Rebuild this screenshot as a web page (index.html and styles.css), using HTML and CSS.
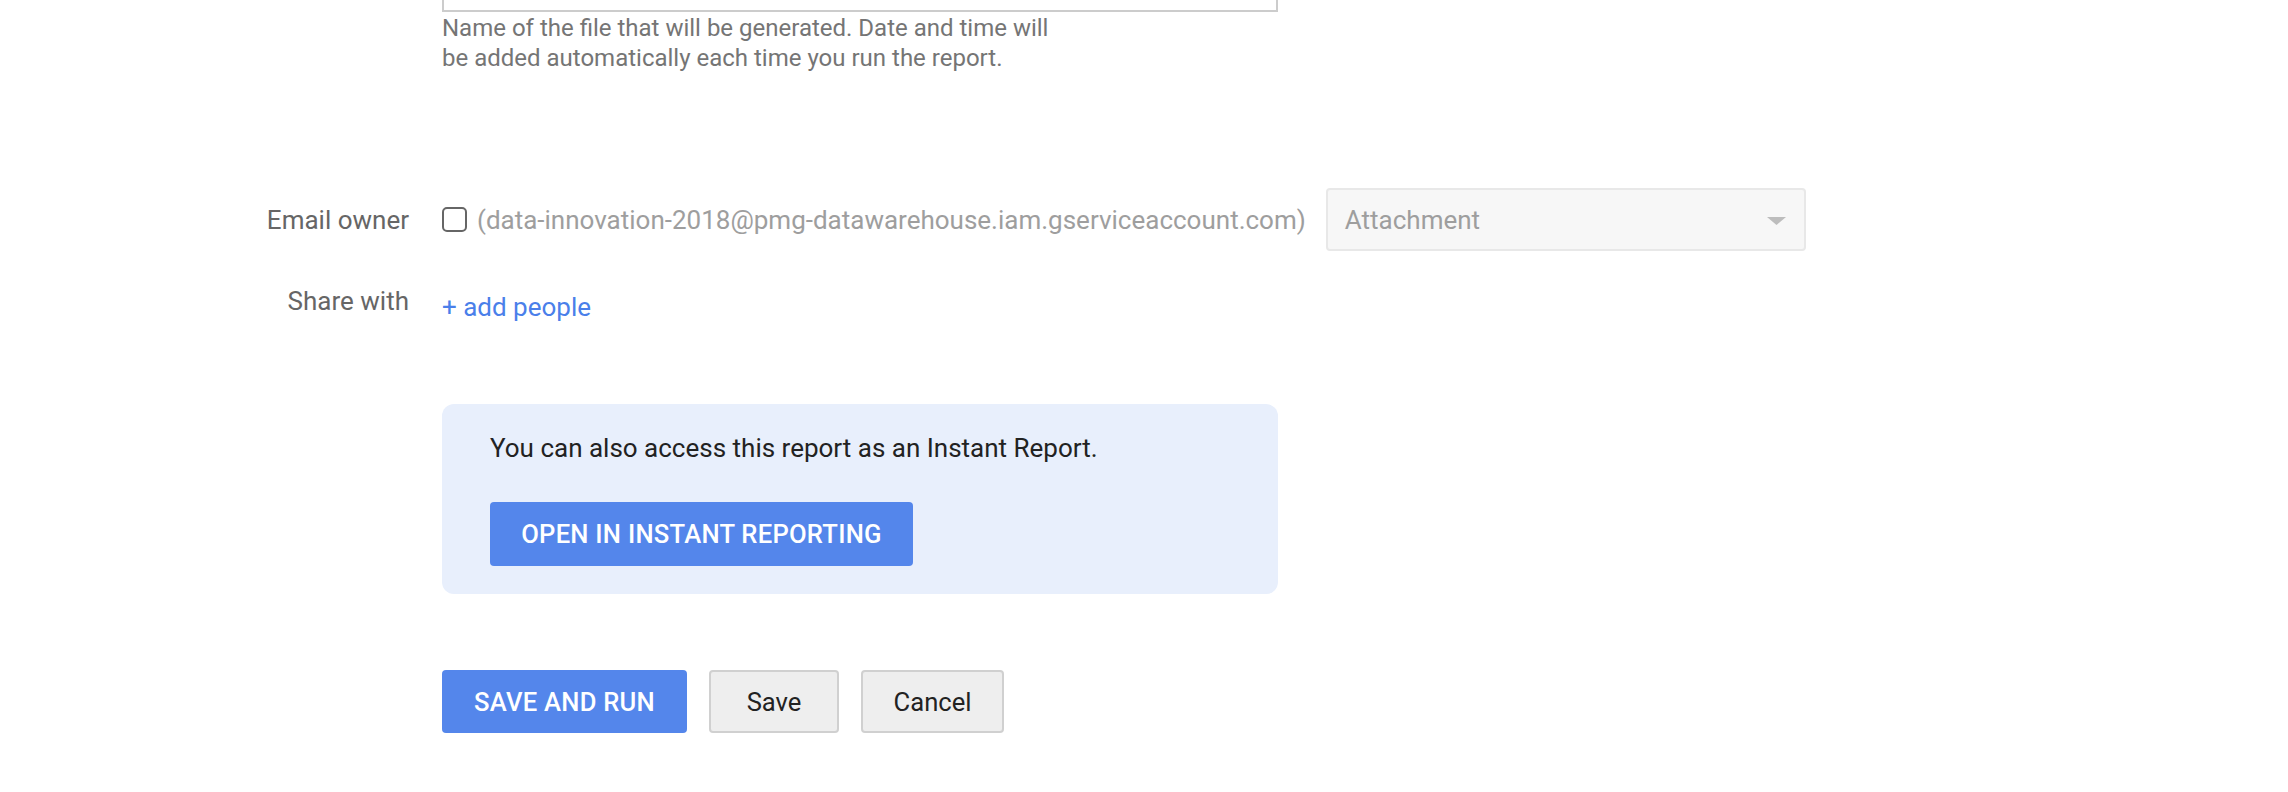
FILE: index.html
```html
<!DOCTYPE html>
<html lang="en">
<head>
<meta charset="utf-8">
<title>Report settings</title>
<link rel="stylesheet" href="styles.css">
</head>
<body>
<div class="page">
  <div class="row row-file">
    <div class="label"></div>
    <div class="field">
      <div class="text-input"></div>
      <p class="helper">Name of the file that will be generated. Date and time will<br>be added automatically each time you run the report.</p>
    </div>
  </div>

  <div class="row row-email">
    <div class="label">Email owner</div>
    <div class="field email-field">
      <span class="checkbox"></span>
      <span class="email-text">(data-innovation-2018@pmg-datawarehouse.iam.gserviceaccount.com)</span>
      <div class="select">
        <span class="select-value">Attachment</span>
        <svg class="select-arrow" width="19" height="8" viewBox="0 0 19 8"><path d="M0 0 H19 L9.5 8 Z" fill="#bdbdbd"/></svg>
      </div>
    </div>
  </div>

  <div class="row row-share">
    <div class="label">Share with</div>
    <div class="field">
      <a class="add-link" href="#">+ add people</a>
    </div>
  </div>

  <div class="offset">
    <div class="instant-box">
      <p class="instant-text">You can also access this report as an Instant Report.</p>
      <button class="btn btn-primary btn-instant">OPEN IN INSTANT REPORTING</button>
    </div>

    <div class="actions">
      <button class="btn btn-primary btn-run">SAVE AND RUN</button>
      <button class="btn btn-secondary btn-save">Save</button>
      <button class="btn btn-secondary btn-cancel">Cancel</button>
    </div>
  </div>
</div>
</body>
</html>
```

FILE: styles.css
```css
html, body {
  margin: 0;
  padding: 0;
  background: #ffffff;
}

body {
  font-family: Roboto, "Liberation Sans", Arial, sans-serif;
  font-size: 26px;
  color: #222222;
  overflow: hidden;
}

.page {
  width: 2288px;
  height: 792px;
}

.row {
  display: grid;
  grid-template-columns: 409px 1fr;
  column-gap: 33px;
}

.label {
  text-align: right;
  color: #666666;
  line-height: 30px;
  white-space: nowrap;
}

/* file name row */
.text-input {
  box-sizing: border-box;
  width: 836px;
  height: 62px;
  margin-top: -50px;
  border: 2px solid #cccccc;
  background: #ffffff;
}

.helper {
  margin: 1px 0 0 0;
  font-size: 24px;
  line-height: 30px;
  color: #757575;
}

/* email row */
.row-email {
  margin-top: 115px;
  align-items: center;
}

.email-field {
  display: flex;
  align-items: center;
}

.checkbox {
  box-sizing: border-box;
  width: 25px;
  height: 25px;
  border: 2px solid #666666;
  border-radius: 5px;
  flex: none;
}

.email-text {
  margin-left: 10px;
  color: #9e9e9e;
  white-space: nowrap;
  line-height: 30px;
}

.select {
  box-sizing: border-box;
  margin-left: 20px;
  width: 480px;
  height: 63px;
  display: flex;
  align-items: center;
  justify-content: space-between;
  padding: 0 18px 0 17px;
  background: #f7f7f7;
  border: 2px solid #e8e8e8;
  border-radius: 4px;
}

.select-value {
  color: #9e9e9e;
  line-height: 30px;
}

.select-arrow {
  display: block;
  margin-top: 2px;
}

/* share row */
.row-share {
  margin-top: 35px;
}

.add-link {
  display: inline-block;
  padding-top: 6px;
  line-height: 30px;
  color: #4a7fea;
  text-decoration: none;
}

/* content offset to the field column */
.offset {
  margin-left: 442px;
}

.instant-box {
  box-sizing: border-box;
  width: 836px;
  height: 190px;
  margin-top: 82px;
  padding: 29px 48px 0 48px;
  background: #e8effc;
  border-radius: 12px;
}

.instant-text {
  margin: 0;
  line-height: 30px;
  color: #222222;
}

.btn {
  box-sizing: border-box;
  height: 64px;
  font-family: Roboto, "Liberation Sans", Arial, sans-serif;
  font-size: 25.6px;
  border-radius: 4px;
  cursor: pointer;
  padding: 0;
}

.btn-primary {
  background: #5486eb;
  color: #ffffff;
  border: none;
  font-weight: 500;
  letter-spacing: 0.25px;
}

.btn-instant {
  display: block;
  margin-top: 39px;
  width: 423px;
}

.actions {
  margin-top: 76px;
  display: flex;
  gap: 22px;
}

.btn-run {
  width: 245px;
  height: 63px;
}

.btn-secondary {
  height: 63px;
  background: #eeeeee;
  color: #222222;
  border: 2px solid #d0d0d0;
  font-weight: 400;
}

.btn-save {
  width: 130px;
}

.btn-cancel {
  width: 143px;
}
```
